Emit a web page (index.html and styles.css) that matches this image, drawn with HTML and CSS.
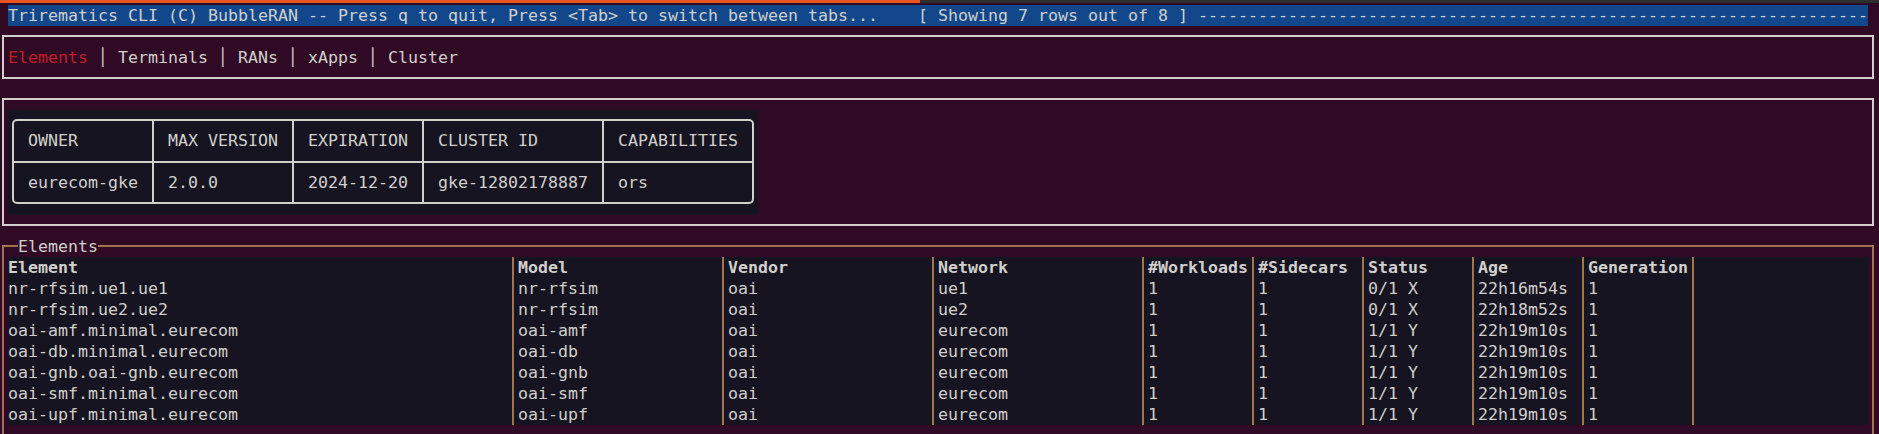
FILE: index.html
```html
<!DOCTYPE html>
<html>
<head>
<meta charset="utf-8">
<title>Trirematics CLI</title>
<link rel="stylesheet" href="styles.css">
</head>
<body>
<div class="tabstrip"><div class="tabstrip-active"></div><div class="tabstrip-rest"></div></div>
<div class="screen">
  <div class="titlebar">Trirematics CLI (C) BubbleRAN -- Press q to quit, Press &lt;Tab&gt; to switch between tabs...    [ Showing 7 rows out of 8 ] -------------------------------------------------------------------</div>

  <div class="panel panel-tabs"><span class="tab tab-active">Elements</span> <span class="tab-sep">│</span> <span class="tab">Terminals</span> <span class="tab-sep">│</span> <span class="tab">RANs</span> <span class="tab-sep">│</span> <span class="tab">xApps</span> <span class="tab-sep">│</span> <span class="tab">Cluster</span></div>

  <div class="panel panel-info">
    <div class="info-surface">
      <div class="info-table">
        <div class="info-cell info-head">OWNER</div>
        <div class="info-cell info-head">MAX VERSION</div>
        <div class="info-cell info-head">EXPIRATION</div>
        <div class="info-cell info-head">CLUSTER ID</div>
        <div class="info-cell info-head">CAPABILITIES</div>
        <div class="info-cell info-data">eurecom-gke</div>
        <div class="info-cell info-data">2.0.0</div>
        <div class="info-cell info-data">2024-12-20</div>
        <div class="info-cell info-data">gke-12802178887</div>
        <div class="info-cell info-data">ors</div>
      </div>
    </div>
  </div>

  <div class="panel panel-elements">
    <span class="legend">Elements</span>
    <div class="grid-table">
      <div class="cell first th">Element</div><div class="cell th">Model</div><div class="cell th">Vendor</div><div class="cell th">Network</div><div class="cell th">#Workloads</div><div class="cell th">#Sidecars</div><div class="cell th">Status</div><div class="cell th">Age</div><div class="cell th">Generation</div><div class="cell last"></div>

      <div class="cell first">nr-rfsim.ue1.ue1</div><div class="cell">nr-rfsim</div><div class="cell">oai</div><div class="cell">ue1</div><div class="cell">1</div><div class="cell">1</div><div class="cell">0/1 X</div><div class="cell">22h16m54s</div><div class="cell">1</div><div class="cell last"></div>

      <div class="cell first">nr-rfsim.ue2.ue2</div><div class="cell">nr-rfsim</div><div class="cell">oai</div><div class="cell">ue2</div><div class="cell">1</div><div class="cell">1</div><div class="cell">0/1 X</div><div class="cell">22h18m52s</div><div class="cell">1</div><div class="cell last"></div>

      <div class="cell first">oai-amf.minimal.eurecom</div><div class="cell">oai-amf</div><div class="cell">oai</div><div class="cell">eurecom</div><div class="cell">1</div><div class="cell">1</div><div class="cell">1/1 Y</div><div class="cell">22h19m10s</div><div class="cell">1</div><div class="cell last"></div>

      <div class="cell first">oai-db.minimal.eurecom</div><div class="cell">oai-db</div><div class="cell">oai</div><div class="cell">eurecom</div><div class="cell">1</div><div class="cell">1</div><div class="cell">1/1 Y</div><div class="cell">22h19m10s</div><div class="cell">1</div><div class="cell last"></div>

      <div class="cell first">oai-gnb.oai-gnb.eurecom</div><div class="cell">oai-gnb</div><div class="cell">oai</div><div class="cell">eurecom</div><div class="cell">1</div><div class="cell">1</div><div class="cell">1/1 Y</div><div class="cell">22h19m10s</div><div class="cell">1</div><div class="cell last"></div>

      <div class="cell first">oai-smf.minimal.eurecom</div><div class="cell">oai-smf</div><div class="cell">oai</div><div class="cell">eurecom</div><div class="cell">1</div><div class="cell">1</div><div class="cell">1/1 Y</div><div class="cell">22h19m10s</div><div class="cell">1</div><div class="cell last"></div>

      <div class="cell first">oai-upf.minimal.eurecom</div><div class="cell">oai-upf</div><div class="cell">oai</div><div class="cell">eurecom</div><div class="cell">1</div><div class="cell">1</div><div class="cell">1/1 Y</div><div class="cell">22h19m10s</div><div class="cell">1</div><div class="cell last"></div>
    </div>
  </div>
</div>
</body>
</html>
```

FILE: styles.css
```css
html, body {
  margin: 0;
  padding: 0;
}
body {
  background: #300a24;
  color: #d0cfcc;
  font-family: "DejaVu Sans Mono", "Liberation Mono", monospace;
  font-size: 16.61px;
  line-height: 21px;
  width: 1879px;
  height: 434px;
  overflow: hidden;
}

.tabstrip {
  display: flex;
  height: 3px;
}
.tabstrip-active {
  width: 920px;
  background: #e95420;
}
.tabstrip-rest {
  flex: 1;
  background: #2e2e2e;
}

.screen {
  padding-top: 2px;
}

.titlebar {
  margin-left: 8px;
  width: 1860px;
  height: 21px;
  background: #12488b;
  color: #d0cfcc;
  white-space: pre;
  overflow: hidden;
}

.panel {
  margin-left: 2px;
  width: 1872px;
  box-sizing: border-box;
  border: 2px solid #d0cfcc;
}

.panel-tabs {
  margin-top: 9px;
  height: 44px;
  padding: 10px 0 9px 4px;
  white-space: pre;
}
.tab {
  color: #d0cfcc;
}
.tab-active {
  color: #c01c28;
}
.tab-sep {
  color: #d0cfcc;
}

.panel-info {
  margin-top: 19px;
  height: 128px;
  padding: 10px 4px 9px 4px;
}
.info-surface {
  width: 750px;
  height: 105px;
  box-sizing: border-box;
  background: #171421;
  padding: 9px 0 0 4px;
}
.info-table {
  display: grid;
  grid-template-columns: 138px 140px 130px 180px 150px;
  width: 742px;
  box-sizing: border-box;
  border: 2px solid #d0cfcc;
  border-radius: 5px;
}
.info-cell {
  box-sizing: border-box;
  padding-left: 14px;
  white-space: pre;
}
.info-cell:not(:nth-child(5n+1)) {
  border-left: 2px solid #d0cfcc;
}
.info-head {
  height: 42px;
  line-height: 40px;
  border-bottom: 2px solid #d0cfcc;
}
.info-data {
  height: 39px;
  line-height: 40px;
}

.panel-elements {
  position: relative;
  margin-top: 19px;
  height: 192px;
  border-color: #a2734c;
  padding: 10px 4px 0 4px;
}
.legend {
  position: absolute;
  left: 14px;
  top: -11px;
  background: #300a24;
  color: #d0cfcc;
  line-height: 21px;
  white-space: pre;
}

.grid-table {
  display: grid;
  grid-template-columns: 506px repeat(3, 210px) repeat(5, 110px) 174px;
  width: 1860px;
  background: #171421;
}
.cell {
  box-sizing: border-box;
  height: 21px;
  padding-left: 4px;
  border-right: 2px solid #a2734c;
  white-space: pre;
  overflow: hidden;
}
.cell.first {
  padding-left: 0;
}
.cell.last {
  border-right: 0;
}
.th {
  font-weight: bold;
}
```
